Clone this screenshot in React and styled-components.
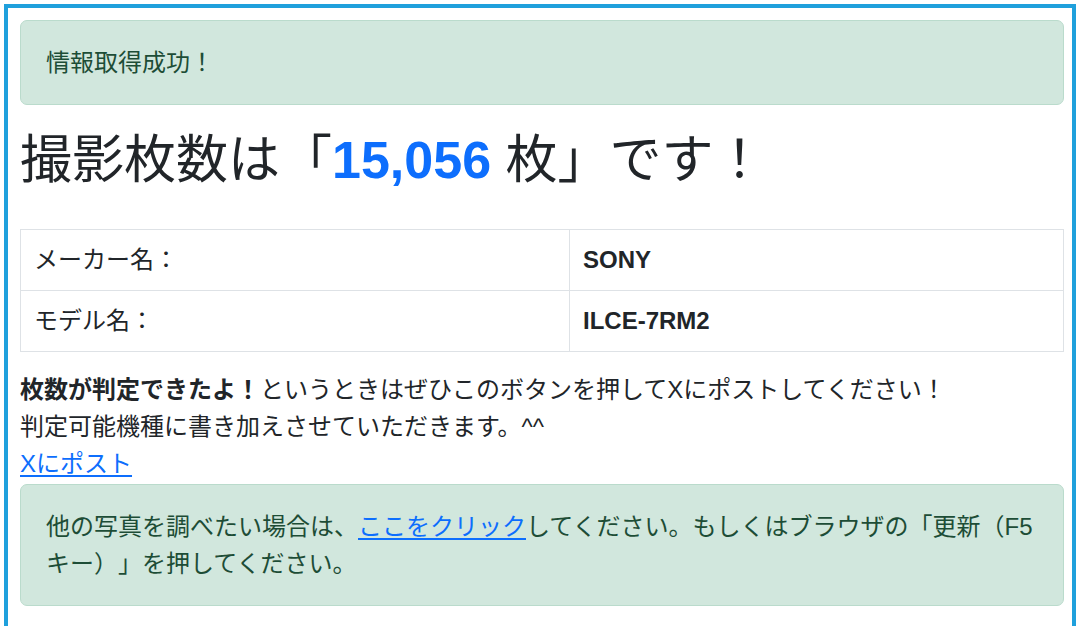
import styled, { createGlobalStyle } from "styled-components";

const GlobalStyle = createGlobalStyle`
  html, body {
    margin: 0;
    padding: 0;
    background: #ffffff;
  }
  body {
    font-family: "Liberation Sans", "Noto Sans CJK JP", sans-serif;
    font-size: 24px;
    color: #212529;
    text-spacing-trim: space-all;
  }
`;

const StyledFrame = styled.div`
  box-sizing: border-box;
  width: 1072px;
  margin: 4px 0 0 4px;
  padding: 12px 8px 60px 12px;
  border: 4px solid #1fa0dc;
  border-bottom: none;
`;

const StyledAlert = styled.div`
  background: #d1e7dd;
  border: 1px solid #badbcc;
  border-radius: 7px;
  color: #1d4d36;
  padding: 23px 25px;
  line-height: 37px;
  margin-top: ${(props) => (props.$flush ? "2px" : "0")};
`;

const StyledTitle = styled.h1`
  margin: 24px 0 38px;
  font-size: 52px;
  font-weight: 400;
  line-height: 62px;
  color: #212529;
`;

const StyledCount = styled.span`
  color: #0d6efd;
  font-weight: 700;
`;

const StyledTable = styled.table`
  width: 100%;
  border-collapse: collapse;
  margin-bottom: 19px;
`;

const StyledCell = styled.td`
  border: 1px solid #dee2e6;
  padding: 12px 13px;
  line-height: 36px;
  width: ${(props) => (props.$label ? "522px" : "auto")};
  font-weight: ${(props) => (props.$label ? 400 : 700)};
`;

const StyledText = styled.p`
  margin: 0;
  line-height: 37px;
`;

const StyledLink = styled.a`
  color: #0d6efd;
  text-decoration: underline;
  text-underline-offset: 3px;
`;

const rows = [
  { label: "メーカー名：", value: "SONY" },
  { label: "モデル名：", value: "ILCE-7RM2" },
];

const App = () => {
  return (
    <>
      <GlobalStyle />
      <StyledFrame>
        <StyledAlert>情報取得成功！</StyledAlert>
        <StyledTitle>
          撮影枚数は「<StyledCount>15,056</StyledCount> 枚」です！
        </StyledTitle>
        <StyledTable>
          <tbody>
            {rows.map((row) => (
              <tr key={row.label}>
                <StyledCell $label>{row.label}</StyledCell>
                <StyledCell>{row.value}</StyledCell>
              </tr>
            ))}
          </tbody>
        </StyledTable>
        <StyledText>
          <strong>枚数が判定できたよ！</strong>
          というときはぜひこのボタンを押してXにポストしてください！
          <br />
          判定可能機種に書き加えさせていただきます。^^
          <br />
          <StyledLink href="#">Xにポスト</StyledLink>
        </StyledText>
        <StyledAlert $flush>
          他の写真を調べたい場合は、
          <StyledLink href="#">ここをクリック</StyledLink>
          してください。もしくはブラウザの「更新（F5キー）」を押してください。
        </StyledAlert>
      </StyledFrame>
    </>
  );
};

export default App;
